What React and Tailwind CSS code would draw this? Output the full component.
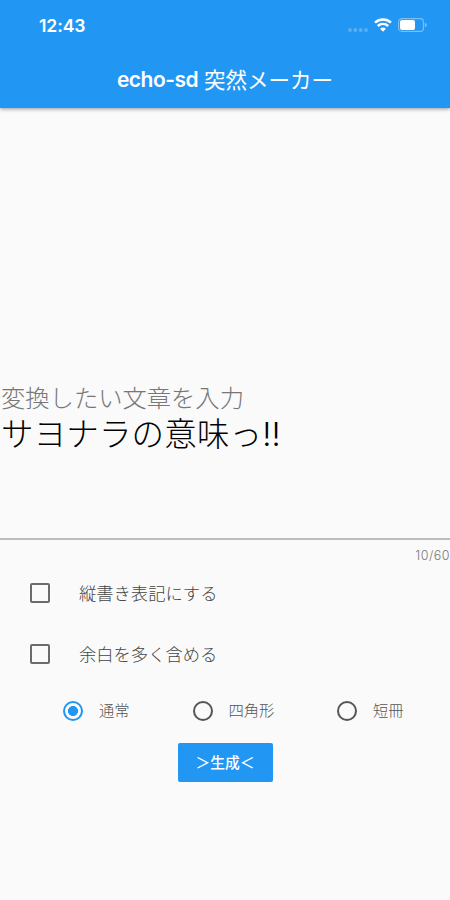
import { useState } from "react";

const shapes = [
  { label: "通常", className: "w-[129.5px]" },
  { label: "四角形", className: "w-[144.5px]" },
  { label: "短冊", className: "w-[80px]" },
];

const StatusBar = () => (
  <div className="flex h-[50px] items-center pl-[39px] pr-[22px]">
    <span className="pt-[2px] text-[17.6px] leading-[20px] font-semibold tracking-[-0.1px]">
      12:43
    </span>

    <div className="ml-auto flex items-center">
      {/* SIGNAL */}
      <svg className="mt-[9px] mr-[5px]" width="21" height="4" viewBox="0 0 21 4" fill="white" fillOpacity="0.25">
        <circle cx="2" cy="2" r="1.9" />
        <circle cx="7.3" cy="2" r="1.9" />
        <circle cx="12.7" cy="2" r="1.9" />
        <circle cx="18" cy="2" r="1.9" />
      </svg>

      {/* WIFI */}
      <svg className="mr-[6px]" width="18" height="14" viewBox="0 0 18 14" fill="none" stroke="white">
        <path d="M1 4.6C5.5 0.4 12.5 0.4 17 4.6" strokeWidth="2.5" />
        <path d="M3.8 8C6.8 5.2 11.2 5.2 14.2 8" strokeWidth="2.4" />
        <path d="M9 13.8L6.1 10.8C7.8 9.2 10.2 9.2 11.9 10.8Z" fill="white" stroke="none" />
      </svg>

      {/* BATTERY */}
      <svg width="30" height="14" viewBox="0 0 30 14" fill="none">
        <rect x="0.6" y="0.6" width="24.8" height="12.8" rx="3.2" stroke="white" strokeOpacity="0.4" strokeWidth="1.1" />
        <rect x="2" y="2" width="15" height="10" rx="2" fill="white" />
        <path d="M26.8 4.6C29.4 5.4 29.4 8.6 26.8 9.4Z" fill="white" fillOpacity="0.4" />
      </svg>
    </div>
  </div>
);

const CheckRow = ({ label }) => {
  const [checked, setChecked] = useState(false);

  return (
    <label className="flex h-[61px] items-center pl-[30px] text-[17.3px] font-light text-[#444]">
      <input
        type="checkbox"
        checked={checked}
        onChange={(e) => setChecked(e.target.checked)}
        className="mr-[29px] size-[20px] appearance-none rounded-[2px] border-2 border-[#6b6b6b] checked:border-[#2196f3] checked:bg-[#2196f3]"
      />
      <span className="pt-[2px]">{label}</span>
    </label>
  );
};

const App = () => {
  const [text, setText] = useState("サヨナラの意味っ!!");
  const [shape, setShape] = useState("通常");

  return (
    <div className="h-[900px] w-[450px] overflow-hidden bg-[#fafafa] font-[Inter,'Noto_Sans_CJK_JP',sans-serif]">
      {/* HEADER */}
      <header className="h-[108px] bg-[#2196f3] text-white shadow-[0_1px_4px_rgba(0,0,0,0.4)]">
        <StatusBar />
        <h1 className="flex h-[58px] items-center justify-center gap-[6px] pt-[2px] text-[21.5px] whitespace-nowrap">
          <span className="text-[21px] font-semibold tracking-[-0.5px]">
            echo-sd
          </span>
          <span>突然メーカー</span>
        </h1>
      </header>

      {/* TEXT FIELD */}
      <div className="flex h-[432px] flex-col border-b-2 border-[#bdbdbd] pt-[275px] pl-px">
        <label
          htmlFor="source"
          className="text-[24.3px] leading-[30px] font-light text-[#777]"
        >
          変換したい文章を入力
        </label>
        <textarea
          id="source"
          maxLength={60}
          value={text}
          onChange={(e) => setText(e.target.value)}
          className="h-[100px] w-full resize-none text-[32.5px] leading-[43px] font-light tracking-[0.15px] text-black outline-none"
        />
      </div>
      <div className="h-[22px] pt-[7px] text-right text-[12.5px] leading-[18px] font-light tracking-[0.5px] text-[#777]">
        {text.length}/60
      </div>

      {/* OPTIONS */}
      <CheckRow label="縦書き表記にする" />
      <CheckRow label="余白を多く含める" />

      <div className="flex h-[53px] items-center pl-[63px] text-[15.3px] font-light text-[#555]">
        {shapes.map((item) => (
          <label
            key={item.label}
            className={`flex items-center whitespace-nowrap ${item.className}`}
          >
            <input
              type="radio"
              name="shape"
              checked={shape === item.label}
              onChange={() => setShape(item.label)}
              className="mr-[16px] size-[20px] shrink-0 appearance-none rounded-full border-2 border-[#555] checked:border-[#2196f3] checked:bg-[radial-gradient(circle,#2196f3_0_4.7px,transparent_5.3px)]"
            />
            <span className="pt-px">{item.label}</span>
          </label>
        ))}
      </div>

      <button
        type="button"
        className="mx-auto mt-[6px] flex h-[39px] w-[95px] items-center justify-center rounded-[2px] bg-[#2196f3] pt-px text-[14.8px] font-medium text-white"
      >
        ＞生成＜
      </button>
    </div>
  );
};

export default App;
